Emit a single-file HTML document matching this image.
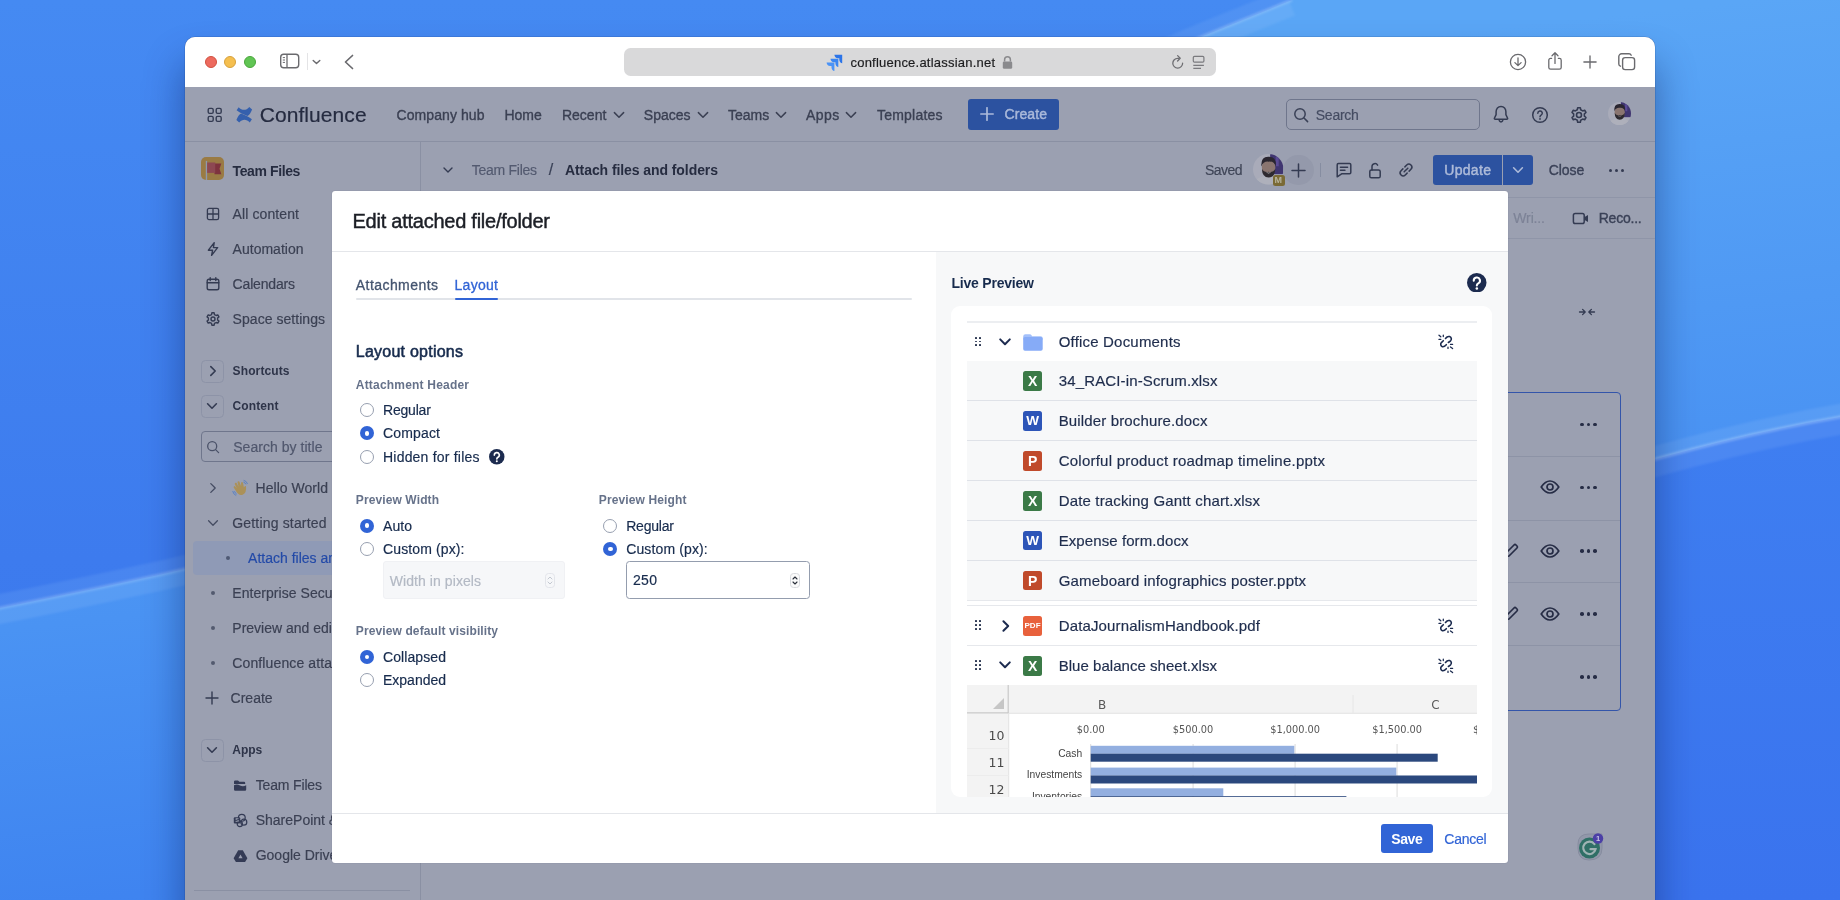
<!DOCTYPE html>
<html lang="en"><head><meta charset="utf-8"><title>Edit attached file/folder</title>
<style>
html,body{margin:0;padding:0;}
body{width:1840px;height:900px;overflow:hidden;position:relative;background:#4285f0;
 font-family:"Liberation Sans",sans-serif;}
#stage{position:absolute;left:0;top:0;width:1840px;height:900px;overflow:hidden;will-change:transform;}
.b{position:absolute;box-sizing:border-box;display:block;}
.t{position:absolute;white-space:nowrap;display:block;}
</style></head>
<body>
<div id="stage">
<svg class="b" style="left:0;top:0" width="1840" height="900" viewBox="0 0 1840 900">
<defs>
<linearGradient id="g0" x1="0" y1="0" x2="0" y2="1"><stop offset="0" stop-color="#458af2"/><stop offset="0.62" stop-color="#3d7bee"/><stop offset="1" stop-color="#3a76ea"/></linearGradient>
<linearGradient id="g1" gradientUnits="userSpaceOnUse" x1="1750" y1="0" x2="1846.1" y2="889.6"><stop offset="0" stop-color="#5aa6f6"/><stop offset="0.49" stop-color="#4a93f3"/><stop offset="0.8" stop-color="#3f84f0"/><stop offset="1" stop-color="#3b7fef"/></linearGradient>
<linearGradient id="g2" x1="0" y1="0" x2="0" y2="1"><stop offset="0" stop-color="#3f7ff1"/><stop offset="1" stop-color="#3a73ee"/></linearGradient>
<filter id="bl" x="-5%" y="-5%" width="110%" height="110%"><feGaussianBlur stdDeviation="0.9"/></filter>
</defs>
<rect width="1840" height="900" fill="url(#g0)"/>
<path d="M-60 619 L 0 608 C 60 596 125 583 185 569 C 485 506 901 160 1201 37 L 1292 0" fill="none" stroke="#7fb0f7" stroke-opacity="0.20" stroke-width="14" transform="translate(0,-7)" filter="url(#bl)"/>
<path d="M-60 619 L 0 608 C 60 596 125 583 185 569 C 485 506 901 160 1201 37 L 1292 0 L1900 0 L1900 900 L-60 900 Z" fill="url(#g1)"/>
<path d="M-60 619 L 0 608 C 60 596 125 583 185 569 C 485 506 901 160 1201 37 L 1292 0" fill="none" stroke="#9cc6fb" stroke-opacity="0.16" stroke-width="16" transform="translate(0,8)" filter="url(#bl)"/>
<path d="M-60 619 L 0 608 C 60 596 125 583 185 569 C 485 506 901 160 1201 37 L 1292 0" fill="none" stroke="#b4d4fc" stroke-opacity="0.33" stroke-width="3" filter="url(#bl)"/>
<path d="M1400 542 C 1550 487 1700 441 1840 417 L 1900 407" fill="none" stroke="#9cc6fb" stroke-opacity="0.16" stroke-width="13" transform="translate(0,-6.5)" filter="url(#bl)"/>
<path d="M1400 542 C 1550 487 1700 441 1840 417 L 1900 407 L1900 900 L1400 900 Z" fill="url(#g2)"/>
<path d="M1400 542 C 1550 487 1700 441 1840 417 L 1900 407" fill="none" stroke="#8fbdf8" stroke-opacity="0.16" stroke-width="18" transform="translate(0,9)" filter="url(#bl)"/>
<path d="M1400 542 C 1550 487 1700 441 1840 417 L 1900 407" fill="none" stroke="#b4d4fc" stroke-opacity="0.42" stroke-width="3" filter="url(#bl)"/>
</svg>
<div class="b" style="left:185px;top:37px;width:1470px;height:900px;border-radius:10px 10px 0 0;box-shadow:0 28px 38px 2px rgba(8,24,80,0.42),0 0 0 0.5px rgba(20,40,90,0.25);background:#9ba0b1;"></div>
<div class="b" style="left:185px;top:37px;width:1470px;height:50px;border-radius:10px 10px 0 0;background:#fff;"></div>
<div class="b" style="left:204.5px;top:56px;width:12px;height:12px;border-radius:50%;background:#ed6a5e;border:0.5px solid #d1503f;"></div>
<div class="b" style="left:224px;top:56px;width:12px;height:12px;border-radius:50%;background:#f5bf4f;border:0.5px solid #d7a13c;"></div>
<div class="b" style="left:243.5px;top:56px;width:12px;height:12px;border-radius:50%;background:#61c554;border:0.5px solid #4aa73c;"></div>
<svg class="b" style="left:279px;top:52px;" width="22" height="18" viewBox="0 0 22 18"><rect x="1.7" y="2.2" width="18" height="13.6" rx="3" fill="none" stroke="#6a6a6e" stroke-width="1.4"/><line x1="8" y1="2.2" x2="8" y2="15.8" stroke="#6a6a6e" stroke-width="1.3"/><path d="M3.8 5.6h2.2M3.8 8h2.2M3.8 10.4h2.2" stroke="#6a6a6e" stroke-width="1" fill="none"/></svg>
<div class="b" style="left:306.5px;top:53px;width:1px;height:17px;background:#e4e4e6;"></div>
<svg class="b" style="left:311px;top:57px;" width="11" height="10" viewBox="0 0 11 10"><path d="M2.2 3.4 L5.5 6.6 L8.8 3.4" fill="none" stroke="#6a6a6e" stroke-width="1.4" stroke-linecap="round" stroke-linejoin="round"/></svg>
<svg class="b" style="left:341px;top:53px;" width="16" height="18" viewBox="0 0 16 18"><path d="M11.5 2.5 L4.5 9 L11.5 15.5" fill="none" stroke="#6a6a6e" stroke-width="1.7" stroke-linecap="round" stroke-linejoin="round"/></svg>
<div class="b" style="left:624px;top:48.4px;width:592px;height:27.2px;border-radius:6.5px;background:#d9d9da;"></div>
<svg class="b" style="left:826px;top:53.5px;" width="17" height="17" viewBox="0 0 17 17"><defs><linearGradient id="jg" x1="1" y1="0" x2="0" y2="1"><stop offset="0" stop-color="#2a7bf0"/><stop offset="1" stop-color="#5a9bf5"/></linearGradient></defs><path d="M16.2 0.8H8.4c0 1.95 1.55 3.5 3.5 3.5h1.4v1.4c0 1.95 1.55 3.5 2.9 3.5z" fill="#2b74e8"/><path d="M12.3 4.7H4.5c0 1.95 1.55 3.5 3.5 3.5h1.4v1.4c0 1.95 1.55 3.5 2.9 3.5z" fill="#3a86f2"/><path d="M8.4 8.6H0.6c0 1.95 1.55 3.5 3.5 3.5h1.4v1.4c0 1.95 1.55 3.5 2.9 3.5z" fill="#4b93f6"/></svg>
<span class="t" style="left:850.50px;top:54.00px;font-size:13px;line-height:17px;color:#1d1d1f;letter-spacing:0.218px;-webkit-text-stroke:0.18px #1d1d1f;">confluence.atlassian.net</span>
<svg class="b" style="left:1001px;top:55px;" width="13" height="15" viewBox="0 0 13 15"><path d="M3.6 6.6V4.7a2.9 2.9 0 0 1 5.8 0v1.9" fill="none" stroke="#8a8a8d" stroke-width="1.5"/><rect x="1.8" y="6.4" width="9.4" height="7.4" rx="1.4" fill="#8a8a8d"/></svg>
<svg class="b" style="left:1169.5px;top:54.4px;" width="16" height="17" viewBox="0 0 16 17"><path d="M12.6 9.2a4.9 4.9 0 1 1-4.9-4.9h1.6" fill="none" stroke="#6e6e72" stroke-width="1.3" stroke-linecap="round"/><path d="M7.6 1.6 L10.2 4.3 L7.6 7" fill="none" stroke="#6e6e72" stroke-width="1.3" stroke-linecap="round" stroke-linejoin="round"/></svg>
<svg class="b" style="left:1190px;top:54px;" width="16" height="17" viewBox="0 0 16 17"><rect x="3.300" y="2.300" width="10.600" height="5.800" rx="1.200" fill="none" stroke="#7a7a7e" stroke-width="1.200"/><path d="M3.300 11.300h10.600M3.300 14.400h7.700" stroke="#7a7a7e" stroke-width="1.200" fill="none"/></svg>
<svg class="b" style="left:1508px;top:51.5px;" width="20" height="20" viewBox="0 0 20 20"><circle cx="10" cy="10" r="7.6" fill="none" stroke="#6a6a6e" stroke-width="1.3"/><path d="M10 5.8v7.6M6.9 10.6 L10 13.6 L13.1 10.6" fill="none" stroke="#6a6a6e" stroke-width="1.3" stroke-linecap="round" stroke-linejoin="round"/></svg>
<svg class="b" style="left:1546px;top:51px;" width="18" height="20" viewBox="0 0 18 20"><path d="M5.6 7.4H4.6a1.8 1.8 0 0 0-1.8 1.8v7.2a1.8 1.8 0 0 0 1.8 1.8h8.8a1.8 1.8 0 0 0 1.8-1.8V9.2a1.8 1.8 0 0 0-1.8-1.8h-1" fill="none" stroke="#6a6a6e" stroke-width="1.3" stroke-linecap="round"/><path d="M9 12.4V2M6 4.8 L9 1.8 L12 4.8" fill="none" stroke="#6a6a6e" stroke-width="1.3" stroke-linecap="round" stroke-linejoin="round"/></svg>
<svg class="b" style="left:1582px;top:53.5px;" width="16" height="16" viewBox="0 0 16 16"><path d="M8 1.9v12.2M1.9 8h12.2" stroke="#6a6a6e" stroke-width="1.35" stroke-linecap="round"/></svg>
<svg class="b" style="left:1617px;top:51.5px;" width="20" height="20" viewBox="0 0 20 20"><rect x="5.6" y="5.6" width="12" height="12" rx="2.6" fill="#fff" stroke="#6a6a6e" stroke-width="1.4"/><path d="M14.2 3.2 a2.4 2.4 0 0 0-2.2-1.4H4.6a2.8 2.8 0 0 0-2.8 2.8V12a2.4 2.4 0 0 0 1.6 2.2" fill="none" stroke="#6a6a6e" stroke-width="1.4" stroke-linecap="round"/></svg>
<div class="b" style="left:185px;top:140.5px;width:1470px;height:1px;background:#8a90a3;"></div>
<svg class="b" style="left:206px;top:105.6px;" width="18" height="18" viewBox="0 0 18 18"><rect x="2.2" y="2.4" width="5" height="5" rx="1.4" fill="none" stroke="#343b52" stroke-width="1.4"/><rect x="2.2" y="10.4" width="5" height="5" rx="1.4" fill="none" stroke="#343b52" stroke-width="1.4"/><rect x="10.2" y="2.4" width="5" height="5" rx="1.4" fill="none" stroke="#343b52" stroke-width="1.4"/><rect x="10.2" y="10.4" width="5" height="5" rx="1.4" fill="none" stroke="#343b52" stroke-width="1.4"/></svg>
<svg class="b" style="left:230px;top:100px;" width="30" height="30" viewBox="230 100 30 30"><path d="M236.6 110.3 L238.7 107.2 C 242 110.6, 246 110.9, 249.3 107 L252.1 109.5 C 251 112.5, 249.5 114.8, 247.5 116 C 243.5 114.6, 239.8 112.8, 236.6 110.3 Z" fill="#3560ad"/><path d="M236.6 110.3 L238.7 107.2 C 242 110.6, 246 110.9, 249.3 107 L252.1 109.5 C 251 112.5, 249.5 114.8, 247.5 116 C 243.5 114.6, 239.8 112.8, 236.6 110.3 Z" fill="#3560ad" transform="rotate(180 244.25 114.8)"/></svg>
<span class="t" style="left:259.70px;top:100.60px;font-size:21px;line-height:27px;color:#252b40;letter-spacing:0.073px;-webkit-text-stroke:0.18px #252b40;">Confluence</span>
<span class="t" style="left:396.50px;top:105.50px;font-size:14px;line-height:18px;color:#3b4053;letter-spacing:0.083px;-webkit-text-stroke:0.35px #3b4053;">Company hub</span>
<span class="t" style="left:504.50px;top:105.50px;font-size:14px;line-height:18px;color:#3b4053;letter-spacing:-0.015px;-webkit-text-stroke:0.35px #3b4053;">Home</span>
<span class="t" style="left:562.00px;top:105.50px;font-size:14px;line-height:18px;color:#3b4053;letter-spacing:-0.012px;-webkit-text-stroke:0.35px #3b4053;">Recent</span>
<svg class="b" style="left:612.7px;top:111px;" width="12" height="8" viewBox="0 0 12 8"><path d="M1.4 1.6 L6 6.2 L10.6 1.6" fill="none" stroke="#3b4053" stroke-width="1.5" stroke-linecap="round" stroke-linejoin="round"/></svg>
<span class="t" style="left:643.80px;top:105.50px;font-size:14px;line-height:18px;color:#3b4053;letter-spacing:0.000px;-webkit-text-stroke:0.35px #3b4053;">Spaces</span>
<svg class="b" style="left:696.5px;top:111px;" width="12" height="8" viewBox="0 0 12 8"><path d="M1.4 1.6 L6 6.2 L10.6 1.6" fill="none" stroke="#3b4053" stroke-width="1.5" stroke-linecap="round" stroke-linejoin="round"/></svg>
<span class="t" style="left:728.00px;top:105.50px;font-size:14px;line-height:18px;color:#3b4053;letter-spacing:-0.009px;-webkit-text-stroke:0.35px #3b4053;">Teams</span>
<svg class="b" style="left:775px;top:111px;" width="12" height="8" viewBox="0 0 12 8"><path d="M1.4 1.6 L6 6.2 L10.6 1.6" fill="none" stroke="#3b4053" stroke-width="1.5" stroke-linecap="round" stroke-linejoin="round"/></svg>
<span class="t" style="left:806.00px;top:105.50px;font-size:14px;line-height:18px;color:#3b4053;letter-spacing:0.430px;-webkit-text-stroke:0.35px #3b4053;">Apps</span>
<svg class="b" style="left:845px;top:111px;" width="12" height="8" viewBox="0 0 12 8"><path d="M1.4 1.6 L6 6.2 L10.6 1.6" fill="none" stroke="#3b4053" stroke-width="1.5" stroke-linecap="round" stroke-linejoin="round"/></svg>
<span class="t" style="left:877.00px;top:105.50px;font-size:14px;line-height:18px;color:#3b4053;letter-spacing:0.211px;-webkit-text-stroke:0.35px #3b4053;">Templates</span>
<div class="b" style="left:967.5px;top:98.8px;width:91.5px;height:30.8px;background:#2c52a0;border-radius:3px;"></div>
<svg class="b" style="left:980px;top:107px;" width="14" height="14" viewBox="0 0 14 14"><path d="M7 0.8v12.400M0.800 7h12.400" stroke="#aab9da" stroke-width="1.7" stroke-linecap="round"/></svg>
<span class="t" style="left:1004.50px;top:105.30px;font-size:14px;line-height:18px;color:#aab9da;letter-spacing:0.096px;-webkit-text-stroke:0.45px #aab9da;">Create</span>
<div class="b" style="left:1285.5px;top:98.8px;width:194px;height:30.8px;border:1.2px solid #6f768c;border-radius:5px;"></div>
<svg class="b" style="left:1293px;top:106.5px;" width="16" height="16" viewBox="0 0 16 16"><circle cx="7" cy="7" r="5.2" fill="none" stroke="#3a4157" stroke-width="1.5"/><path d="M11 11 L14.6 14.6" stroke="#3a4157" stroke-width="1.500" stroke-linecap="round"/></svg>
<span class="t" style="left:1315.80px;top:105.70px;font-size:14px;line-height:18px;color:#454c62;letter-spacing:-0.272px;-webkit-text-stroke:0.18px #454c62;">Search</span>
<svg class="b" style="left:1491px;top:104px;" width="20" height="21" viewBox="0 0 20 21"><path d="M10 2.6c-3 0-4.900 2.300-4.900 5.200v2.800L3.400 14.200c-.2.500.1 1 .7 1h11.800c.6 0 .9-.5.700-1l-1.700-3.600V7.800c0-2.900-1.900-5.200-4.900-5.200z" fill="none" stroke="#343b52" stroke-width="1.500" stroke-linejoin="round"/><path d="M8.200 16.600a1.900 1.900 0 0 0 3.600 0" fill="none" stroke="#343b52" stroke-width="1.500" stroke-linecap="round"/></svg>
<svg class="b" style="left:1530px;top:104.5px;" width="20" height="20" viewBox="0 0 20 20"><circle cx="10" cy="10" r="7.300" fill="none" stroke="#343b52" stroke-width="1.500"/><path d="M7.800 8.200a2.250 2.250 0 1 1 3.300 2c-.7.400-1.100.800-1.100 1.600" fill="none" stroke="#343b52" stroke-width="1.500" stroke-linecap="round"/><circle cx="10" cy="13.900" r="0.950" fill="#343b52"/></svg>
<svg class="b" style="left:1568.5px;top:104.5px;" width="20" height="20" viewBox="0 0 20 20"><path d="M8.69 2.72 L11.31 2.72 L11.70 4.77 L13.68 5.91 L15.65 5.22 L16.96 7.49 L15.38 8.86 L15.38 11.14 L16.96 12.51 L15.65 14.78 L13.68 14.09 L11.70 15.23 L11.31 17.28 L8.69 17.28 L8.30 15.23 L6.32 14.09 L4.35 14.78 L3.04 12.51 L4.62 11.14 L4.62 8.86 L3.04 7.49 L4.35 5.22 L6.32 5.91 L8.30 4.77Z" fill="none" stroke="#343b52" stroke-width="1.6" stroke-linejoin="round"/><circle cx="10" cy="10" r="2.5" fill="none" stroke="#343b52" stroke-width="1.6"/></svg>
<svg class="b" style="left:1608.0px;top:102.3px;" width="23.0" height="23.0" viewBox="0 0 23.0 23.0"><defs><clipPath id="av1"><circle cx="11.5" cy="11.5" r="11.5"/></clipPath></defs><g clip-path="url(#av1)"><rect width="23.0" height="23.0" fill="#a9abb9"/><rect x="12.88" y="0" width="10.12" height="15.180000000000001" fill="#3f3570"/><rect x="17.02" y="2.3000000000000003" width="2.3000000000000003" height="6.8999999999999995" fill="#5a4a95"/><ellipse cx="11.5" cy="23.92" rx="11.5" ry="7.590000000000001" fill="#aeb0bb"/><ellipse cx="11.73" cy="10.35" rx="5.06" ry="6.44" fill="#8a7570"/><path d="M6.210000000000001 9.43 Q5.75 1.84 11.73 2.07 Q17.71 1.84 17.25 9.43 Q15.87 5.29 11.73 5.75 Q7.82 5.29 6.210000000000001 9.43Z" fill="#2a2630"/><path d="M6.67 11.04 Q6.8999999999999995 17.48 11.73 17.71 Q16.56 17.48 16.79 11.04 Q15.180000000000001 14.03 11.73 13.34 Q8.28 14.03 6.67 11.04Z" fill="#2e2a30"/><path d="M9.66 13.799999999999999 Q11.73 15.41 13.799999999999999 13.799999999999999 Q11.73 14.49 9.66 13.799999999999999Z" fill="#c9c6c6"/></g></svg>
<div class="b" style="left:419.5px;top:141px;width:1px;height:760px;background:#8a90a3;"></div>
<div class="b" style="left:201px;top:156.9px;width:23.2px;height:23.1px;background:#9a7b44;border-radius:5px;overflow:hidden;"></div>
<svg class="b" style="left:201px;top:156.9px;" width="23.2" height="23.1" viewBox="0 0 23.2 23.1"><rect x="4.800" y="3.900" width="1.350" height="19.300" fill="#8f98ad"/><path d="M13.500 6.500h6.900l-1.900 5.300 1.900 5.400h-6.900z" fill="#7e333e"/><path d="M6.150 5.500h8.100v10.400h-8.100z" fill="#8d4852"/></svg>
<span class="t" style="left:232.60px;top:162.00px;font-size:14px;line-height:18px;color:#262c40;letter-spacing:-0.392px;font-weight:700;">Team Files</span>
<svg class="b" style="left:204.6px;top:206px;" width="16" height="16" viewBox="0 0 16 16"><rect x="2.400" y="2.400" width="11.200" height="11.200" rx="1.600" fill="none" stroke="#343b52" stroke-width="1.300"/><path d="M8 2.400v11.200M2.400 8h11.200" stroke="#343b52" stroke-width="1.300"/></svg>
<span class="t" style="left:232.60px;top:205.00px;font-size:14px;line-height:18px;color:#3b4053;letter-spacing:0.103px;-webkit-text-stroke:0.18px #3b4053;">All content</span>
<svg class="b" style="left:204.6px;top:241px;" width="16" height="16" viewBox="0 0 16 16"><path d="M9.200 1.600 L3.400 9.200 H7.600 L6.600 14.400 L12.600 6.600 H8.400 Z" fill="none" stroke="#343b52" stroke-width="1.400" stroke-linejoin="round"/></svg>
<span class="t" style="left:232.60px;top:240.00px;font-size:14px;line-height:18px;color:#3b4053;letter-spacing:0.009px;-webkit-text-stroke:0.18px #3b4053;">Automation</span>
<svg class="b" style="left:204.6px;top:275.7px;" width="16" height="16" viewBox="0 0 16 16"><rect x="2.200" y="3.200" width="11.600" height="10.600" rx="1.800" fill="none" stroke="#343b52" stroke-width="1.400"/><path d="M2.200 6.800h11.600M5.200 1.600v3M10.800 1.600v3" stroke="#343b52" stroke-width="1.400" stroke-linecap="round"/></svg>
<span class="t" style="left:232.60px;top:274.70px;font-size:14px;line-height:18px;color:#3b4053;letter-spacing:-0.177px;-webkit-text-stroke:0.18px #3b4053;">Calendars</span>
<svg class="b" style="left:204.6px;top:310.9px;" width="16" height="16" viewBox="0 0 16 16"><path d="M6.88 1.80 L9.12 1.80 L9.45 3.53 L11.14 4.51 L12.81 3.93 L13.93 5.87 L12.60 7.02 L12.60 8.98 L13.93 10.13 L12.81 12.07 L11.14 11.49 L9.45 12.47 L9.12 14.20 L6.88 14.20 L6.55 12.47 L4.86 11.49 L3.19 12.07 L2.07 10.13 L3.40 8.98 L3.40 7.02 L2.07 5.87 L3.19 3.93 L4.86 4.51 L6.55 3.53Z" fill="none" stroke="#343b52" stroke-width="1.4" stroke-linejoin="round"/><circle cx="8" cy="8" r="2.0" fill="none" stroke="#343b52" stroke-width="1.4"/></svg>
<span class="t" style="left:232.60px;top:309.90px;font-size:14px;line-height:18px;color:#3b4053;letter-spacing:0.043px;-webkit-text-stroke:0.18px #3b4053;">Space settings</span>
<div class="b" style="left:201.0px;top:359.7px;width:23px;height:23px;border:1px solid #8d93a7;border-radius:4.500px;"></div>
<svg class="b" style="left:208.79999999999998px;top:365.2px;" width="8" height="12" viewBox="0 0 8 12"><path d="M1.800 1.600 L6.200 6 L1.800 10.400" fill="none" stroke="#343b52" stroke-width="1.600" stroke-linecap="round" stroke-linejoin="round"/></svg>
<span class="t" style="left:232.60px;top:362.80px;font-size:12px;line-height:16px;color:#2e3449;letter-spacing:0.112px;font-weight:700;">Shortcuts</span>
<div class="b" style="left:201.0px;top:394.7px;width:23px;height:23px;border:1px solid #8d93a7;border-radius:4.500px;"></div>
<svg class="b" style="left:206.39999999999998px;top:402.2px;" width="12" height="8" viewBox="0 0 12 8"><path d="M1.600 1.800 L6 6.200 L10.400 1.800" fill="none" stroke="#343b52" stroke-width="1.600" stroke-linecap="round" stroke-linejoin="round"/></svg>
<span class="t" style="left:232.60px;top:398.00px;font-size:12px;line-height:16px;color:#2e3449;letter-spacing:0.096px;font-weight:700;">Content</span>
<div class="b" style="left:201.2px;top:431.2px;width:240px;height:31px;border:1.200px solid #6f768c;border-radius:4px;"></div>
<svg class="b" style="left:206.3px;top:440.3px;" width="14" height="14" viewBox="0 0 14 14"><circle cx="6.200" cy="6.200" r="4.500" fill="none" stroke="#4a5168" stroke-width="1.300"/><path d="M9.600 9.600 L12.600 12.600" stroke="#4a5168" stroke-width="1.300" stroke-linecap="round"/></svg>
<span class="t" style="left:233.20px;top:438.30px;font-size:14px;line-height:18px;color:#50576d;letter-spacing:0.042px;-webkit-text-stroke:0.18px #50576d;">Search by title</span>
<svg class="b" style="left:208.7px;top:482px;" width="8" height="12" viewBox="0 0 8 12"><path d="M1.800 1.600 L6.200 6 L1.800 10.400" fill="none" stroke="#454c62" stroke-width="1.300" stroke-linecap="round" stroke-linejoin="round"/></svg>
<svg class="b" style="left:231px;top:479px;" width="18" height="18" viewBox="0 0 18 18"><g transform="rotate(-20 9 9.5)"><path d="M4.200 10 L3.400 6.400 Q3.600 4.900 5 5.400 L6 8.200 L5.600 3.400 Q6.200 2 7.600 3 L8.200 7.400 L8.800 2.600 Q9.600 1.400 10.800 2.600 L10.800 7.800 L12 4.400 Q13.200 3.600 13.800 5 L13 10 Q14.200 8.400 15.400 9.400 Q14 15.800 9.400 16.200 Q5.200 16.400 4.200 10Z" fill="#ab9159"/></g><path d="M1.800 12.400 Q2.200 15.200 4.800 16.400M3.600 12.600 Q3.900 14.200 5.400 15" fill="none" stroke="#5a82c4" stroke-width="1" stroke-linecap="round"/><path d="M13 1.400 Q15.600 2 16.400 4.600M12.800 3.200 Q14.200 3.600 14.800 5" fill="none" stroke="#5a82c4" stroke-width="1" stroke-linecap="round"/></svg>
<span class="t" style="left:255.60px;top:479.00px;font-size:14px;line-height:18px;color:#3b4053;letter-spacing:0.030px;-webkit-text-stroke:0.18px #3b4053;">Hello World</span>
<svg class="b" style="left:206.7px;top:519px;" width="12" height="8" viewBox="0 0 12 8"><path d="M1.600 1.800 L6 6.200 L10.400 1.800" fill="none" stroke="#454c62" stroke-width="1.300" stroke-linecap="round" stroke-linejoin="round"/></svg>
<span class="t" style="left:232.30px;top:513.90px;font-size:14px;line-height:18px;color:#3b4053;letter-spacing:0.169px;-webkit-text-stroke:0.18px #3b4053;">Getting started</span>
<div class="b" style="left:193px;top:540.6px;width:226.5px;height:34.2px;background:#8f9ab6;border-radius:4px 0 0 4px;"></div>
<div class="b" style="left:226.1px;top:555.6px;width:4.2px;height:4.2px;border-radius:50%;background:#4f5974;"></div>
<span class="t" style="left:248.10px;top:548.70px;font-size:14px;line-height:18px;color:#234aa8;letter-spacing:0.000px;-webkit-text-stroke:0.18px #234aa8;">Attach files and folders</span>
<div class="b" style="left:210.6px;top:590.6999999999999px;width:4.2px;height:4.2px;border-radius:50%;background:#535a6f;"></div>
<span class="t" style="left:232.30px;top:583.80px;font-size:14px;line-height:18px;color:#3b4053;letter-spacing:0.052px;-webkit-text-stroke:0.18px #3b4053;">Enterprise Security</span>
<div class="b" style="left:210.6px;top:625.6px;width:4.2px;height:4.2px;border-radius:50%;background:#535a6f;"></div>
<span class="t" style="left:232.30px;top:618.70px;font-size:14px;line-height:18px;color:#3b4053;letter-spacing:0.000px;-webkit-text-stroke:0.18px #3b4053;">Preview and edit</span>
<div class="b" style="left:210.6px;top:660.6999999999999px;width:4.2px;height:4.2px;border-radius:50%;background:#535a6f;"></div>
<span class="t" style="left:232.30px;top:653.80px;font-size:14px;line-height:18px;color:#3b4053;letter-spacing:0.120px;-webkit-text-stroke:0.18px #3b4053;">Confluence attachments</span>
<svg class="b" style="left:205.4px;top:690.8px;" width="14" height="14" viewBox="0 0 14 14"><path d="M7 1v12M1 7h12" stroke="#343b52" stroke-width="1.400" stroke-linecap="round"/></svg>
<span class="t" style="left:230.60px;top:688.80px;font-size:14px;line-height:18px;color:#3b4053;letter-spacing:0.000px;-webkit-text-stroke:0.18px #3b4053;">Create</span>
<div class="b" style="left:201.0px;top:738.5px;width:23px;height:23px;border:1px solid #8d93a7;border-radius:4.500px;"></div>
<svg class="b" style="left:206.39999999999998px;top:746.0px;" width="12" height="8" viewBox="0 0 12 8"><path d="M1.600 1.800 L6 6.200 L10.400 1.800" fill="none" stroke="#343b52" stroke-width="1.600" stroke-linecap="round" stroke-linejoin="round"/></svg>
<span class="t" style="left:232.30px;top:742.00px;font-size:12px;line-height:16px;color:#2e3449;letter-spacing:0.000px;font-weight:700;">Apps</span>
<svg class="b" style="left:233px;top:778.5px;" width="14" height="13" viewBox="0 0 14 13"><path d="M1 2.600 Q1 1.400 2.200 1.400 H5 L6.400 2.800 H11 Q12.200 2.800 12.200 4 V5 H1 Z" fill="#343b55"/><path d="M1 6.200 Q4 4.600 7 6.400 Q10 8 13.200 6.200 V10.600 Q13.200 11.800 12 11.800 H2.200 Q1 11.800 1 10.600 Z" fill="#343b55"/></svg>
<span class="t" style="left:255.70px;top:776.00px;font-size:14px;line-height:18px;color:#3b4053;letter-spacing:-0.154px;-webkit-text-stroke:0.18px #3b4053;">Team Files</span>
<svg class="b" style="left:232.5px;top:813px;" width="15" height="15" viewBox="0 0 15 15"><circle cx="8.800" cy="4.800" r="3.400" fill="none" stroke="#343b55" stroke-width="1.200"/><circle cx="10.800" cy="9.200" r="3" fill="none" stroke="#343b55" stroke-width="1.200"/><circle cx="6.800" cy="11" r="2.600" fill="none" stroke="#343b55" stroke-width="1.200"/><rect x="0.800" y="4.200" width="6.400" height="6.400" rx="1" fill="#343b55"/><text x="4" y="9.400" font-size="5.500" font-weight="700" text-anchor="middle" fill="#9ba0b1" font-family="Liberation Sans, sans-serif">S</text></svg>
<span class="t" style="left:255.70px;top:811.00px;font-size:14px;line-height:18px;color:#3b4053;letter-spacing:0.000px;-webkit-text-stroke:0.18px #3b4053;">SharePoint &amp; OneDrive</span>
<svg class="b" style="left:232.5px;top:848.5px;" width="15" height="14" viewBox="0 0 15 14"><path d="M5.200 1.200 H9.800 L14.400 9.200 L12.100 13 H2.900 L0.600 9.200 Z" fill="#343b55"/><path d="M7.500 5.600 L9.600 9.200 H5.400 Z" fill="#9ba0b1"/></svg>
<span class="t" style="left:255.70px;top:846.30px;font-size:14px;line-height:18px;color:#3b4053;letter-spacing:0.000px;-webkit-text-stroke:0.18px #3b4053;">Google Drive</span>
<div class="b" style="left:193.6px;top:890.3px;width:216.7px;height:1px;background:#8a90a3;"></div>
<svg class="b" style="left:441.5px;top:165.8px;" width="12" height="8" viewBox="0 0 12 8"><path d="M2 2 L6 6 L10 2" fill="none" stroke="#343b52" stroke-width="1.400" stroke-linecap="round" stroke-linejoin="round"/></svg>
<span class="t" style="left:471.80px;top:160.50px;font-size:14px;line-height:18px;color:#535a70;letter-spacing:-0.276px;-webkit-text-stroke:0.18px #535a70;">Team Files</span>
<span class="t" style="left:548.70px;top:158.80px;font-size:16px;line-height:21px;color:#3a4157;letter-spacing:0.000px;-webkit-text-stroke:0.18px #3a4157;">/</span>
<span class="t" style="left:565.00px;top:160.50px;font-size:14px;line-height:18px;color:#262c40;letter-spacing:-0.079px;font-weight:700;">Attach files and folders</span>
<span class="t" style="left:1205.00px;top:161.00px;font-size:14px;line-height:18px;color:#3f4557;letter-spacing:-0.549px;-webkit-text-stroke:0.18px #3f4557;">Saved</span>
<svg class="b" style="left:1253.2px;top:154.2px;" width="30.6" height="30.6" viewBox="0 0 30.6 30.6"><defs><clipPath id="av2"><circle cx="15.3" cy="15.3" r="15.3"/></clipPath></defs><g clip-path="url(#av2)"><rect width="30.6" height="30.6" fill="#a9abb9"/><rect x="17.136000000000003" y="0" width="13.464" height="20.196" fill="#3f3570"/><rect x="22.644000000000002" y="3.0600000000000005" width="3.0600000000000005" height="9.18" fill="#5a4a95"/><ellipse cx="15.3" cy="31.824" rx="15.3" ry="10.098" fill="#aeb0bb"/><ellipse cx="15.606000000000002" cy="13.770000000000001" rx="6.732" ry="8.568000000000001" fill="#8a7570"/><path d="M8.262 12.546 Q7.65 2.448 15.606000000000002 2.754 Q23.562 2.448 22.950000000000003 12.546 Q21.114 7.038 15.606000000000002 7.65 Q10.404000000000002 7.038 8.262 12.546Z" fill="#2a2630"/><path d="M8.874 14.688 Q9.18 23.256 15.606000000000002 23.562 Q22.032 23.256 22.338 14.688 Q20.196 18.666 15.606000000000002 17.748 Q11.016 18.666 8.874 14.688Z" fill="#2e2a30"/><path d="M12.852 18.36 Q15.606000000000002 20.502000000000002 18.36 18.36 Q15.606000000000002 19.278000000000002 12.852 18.36Z" fill="#c9c6c6"/></g></svg>
<div class="b" style="left:1283px;top:154.5px;width:30.5px;height:30.5px;border-radius:50%;background:#9499ab;"></div>
<svg class="b" style="left:1291px;top:162.5px;" width="15" height="15" viewBox="0 0 15 15"><path d="M7.500 1v13M1 7.500h13" stroke="#343b52" stroke-width="1.500" stroke-linecap="round"/></svg>
<div class="b" style="left:1272.5px;top:174.5px;width:12.4px;height:11.5px;background:#7a6a35;border-radius:2.500px;"></div>
<span class="t" style="left:1274.60px;top:174.40px;font-size:9px;line-height:12px;color:#b7b39c;letter-spacing:0.000px;font-weight:700;">M</span>
<div class="b" style="left:1319.5px;top:163px;width:1.2px;height:14px;background:#868da1;"></div>
<svg class="b" style="left:1334.5px;top:161px;" width="18" height="18" viewBox="0 0 18 18"><path d="M2.200 3.800 Q2.200 2.600 3.400 2.600 H14.600 Q15.800 2.600 15.800 3.800 V11.600 Q15.800 12.800 14.600 12.800 H6.600 L2.200 15.800 Z" fill="none" stroke="#343b52" stroke-width="1.500" stroke-linejoin="round"/><path d="M5.400 6.200h7.200M5.400 9.200h4.600" stroke="#343b52" stroke-width="1.400" stroke-linecap="round"/></svg>
<svg class="b" style="left:1366.5px;top:160.5px;" width="16" height="19" viewBox="0 0 16 19"><rect x="2.800" y="9" width="10.400" height="7.800" rx="1.600" fill="none" stroke="#343b52" stroke-width="1.500"/><path d="M5 9 V5.600 a3 3 0 0 1 5.600 -1.500" fill="none" stroke="#343b52" stroke-width="1.500" stroke-linecap="round"/></svg>
<svg class="b" style="left:1397px;top:161px;" width="18" height="18" viewBox="0 0 18 18"><g transform="rotate(-45 9 9)" fill="none" stroke="#343b52" stroke-width="1.500" stroke-linecap="round"><path d="M7.600 6 H5 a3 3 0 0 0 0 6 H7.600"/><path d="M10.400 6 H13 a3 3 0 0 1 0 6 H10.400"/><path d="M6.400 9 H11.600"/></g></svg>
<div class="b" style="left:1432.5px;top:154.5px;width:69.3px;height:30.8px;background:#2c52a0;border-radius:3px 0 0 3px;"></div>
<div class="b" style="left:1503px;top:154.5px;width:30px;height:30.8px;background:#2c52a0;border-radius:0 3px 3px 0;"></div>
<span class="t" style="left:1444.20px;top:161.00px;font-size:14px;line-height:18px;color:#aebbd9;letter-spacing:0.331px;-webkit-text-stroke:0.45px #aebbd9;">Update</span>
<svg class="b" style="left:1512px;top:166px;" width="12" height="8" viewBox="0 0 12 8"><path d="M1.600 1.800 L6 6.200 L10.400 1.800" fill="none" stroke="#aebbd9" stroke-width="1.600" stroke-linecap="round" stroke-linejoin="round"/></svg>
<span class="t" style="left:1548.80px;top:161.00px;font-size:14px;line-height:18px;color:#3a4157;letter-spacing:-0.074px;-webkit-text-stroke:0.35px #3a4157;">Close</span>
<div class="b" style="left:1608.8px;top:168.7px;width:3px;height:3px;border-radius:50%;background:#343b52;"></div>
<div class="b" style="left:1615.0px;top:168.7px;width:3px;height:3px;border-radius:50%;background:#343b52;"></div>
<div class="b" style="left:1621.2px;top:168.7px;width:3px;height:3px;border-radius:50%;background:#343b52;"></div>
<div class="b" style="left:1508px;top:197px;width:146.5px;height:1px;background:#8f95a8;"></div>
<div class="b" style="left:1508px;top:238px;width:146.5px;height:1px;background:#8f95a8;"></div>
<span class="t" style="left:1513.30px;top:209.30px;font-size:14px;line-height:18px;color:#7d8397;letter-spacing:-0.140px;-webkit-text-stroke:0.18px #7d8397;">Wri...</span>
<svg class="b" style="left:1572px;top:211px;" width="18" height="15" viewBox="0 0 18 15"><rect x="1.400" y="2.400" width="10.800" height="10.200" rx="1.800" fill="none" stroke="#343b52" stroke-width="1.500"/><path d="M12.200 6.200 L16 4 V11 L12.200 8.800 Z" fill="#343b52"/></svg>
<span class="t" style="left:1598.70px;top:209.30px;font-size:14px;line-height:18px;color:#3a4157;letter-spacing:-0.225px;-webkit-text-stroke:0.35px #3a4157;">Reco...</span>
<svg class="b" style="left:1578px;top:306px;" width="18" height="12" viewBox="0 0 18 12"><path d="M1.500 6h5.500M4.600 3.400 L7.200 6 L4.600 8.600M16.500 6h-5.500M13.400 3.400 L10.800 6 L13.400 8.600" fill="none" stroke="#343b52" stroke-width="1.300" stroke-linecap="round" stroke-linejoin="round"/></svg>
<div class="b" style="left:1400px;top:392.3px;width:220.8px;height:318.5px;border:1.300px solid #3355aa;border-radius:4px;"></div>
<div class="b" style="left:1400px;top:456px;width:219.5px;height:1px;background:#8d93a6;"></div>
<div class="b" style="left:1400px;top:519.7px;width:219.5px;height:1px;background:#8d93a6;"></div>
<div class="b" style="left:1400px;top:582.3px;width:219.5px;height:1px;background:#8d93a6;"></div>
<div class="b" style="left:1400px;top:645.4px;width:219.5px;height:1px;background:#8d93a6;"></div>
<div class="b" style="left:1580.4px;top:422.5px;width:3.6px;height:3.6px;border-radius:50%;background:#262c45;"></div>
<div class="b" style="left:1586.7px;top:422.5px;width:3.6px;height:3.6px;border-radius:50%;background:#262c45;"></div>
<div class="b" style="left:1593.0px;top:422.5px;width:3.6px;height:3.6px;border-radius:50%;background:#262c45;"></div>
<svg class="b" style="left:1538.5px;top:479.4px;" width="22" height="16" viewBox="0 0 22 16"><path d="M2.200 8 Q6.300 2 11 2 Q15.700 2 19.800 8 Q15.700 14 11 14 Q6.300 14 2.200 8Z" fill="none" stroke="#262c45" stroke-width="1.700" stroke-linejoin="round"/><circle cx="11" cy="8" r="3" fill="none" stroke="#262c45" stroke-width="1.700"/></svg>
<div class="b" style="left:1580.4px;top:485.59999999999997px;width:3.6px;height:3.6px;border-radius:50%;background:#262c45;"></div>
<div class="b" style="left:1586.7px;top:485.59999999999997px;width:3.6px;height:3.6px;border-radius:50%;background:#262c45;"></div>
<div class="b" style="left:1593.0px;top:485.59999999999997px;width:3.6px;height:3.6px;border-radius:50%;background:#262c45;"></div>
<svg class="b" style="left:1538.5px;top:543px;" width="22" height="16" viewBox="0 0 22 16"><path d="M2.200 8 Q6.300 2 11 2 Q15.700 2 19.800 8 Q15.700 14 11 14 Q6.300 14 2.200 8Z" fill="none" stroke="#262c45" stroke-width="1.700" stroke-linejoin="round"/><circle cx="11" cy="8" r="3" fill="none" stroke="#262c45" stroke-width="1.700"/></svg>
<div class="b" style="left:1580.4px;top:549.2px;width:3.6px;height:3.6px;border-radius:50%;background:#262c45;"></div>
<div class="b" style="left:1586.7px;top:549.2px;width:3.6px;height:3.6px;border-radius:50%;background:#262c45;"></div>
<div class="b" style="left:1593.0px;top:549.2px;width:3.6px;height:3.6px;border-radius:50%;background:#262c45;"></div>
<svg class="b" style="left:1538.5px;top:606px;" width="22" height="16" viewBox="0 0 22 16"><path d="M2.200 8 Q6.300 2 11 2 Q15.700 2 19.800 8 Q15.700 14 11 14 Q6.300 14 2.200 8Z" fill="none" stroke="#262c45" stroke-width="1.700" stroke-linejoin="round"/><circle cx="11" cy="8" r="3" fill="none" stroke="#262c45" stroke-width="1.700"/></svg>
<div class="b" style="left:1580.4px;top:612.2px;width:3.6px;height:3.6px;border-radius:50%;background:#262c45;"></div>
<div class="b" style="left:1586.7px;top:612.2px;width:3.6px;height:3.6px;border-radius:50%;background:#262c45;"></div>
<div class="b" style="left:1593.0px;top:612.2px;width:3.6px;height:3.6px;border-radius:50%;background:#262c45;"></div>
<svg class="b" style="left:1502px;top:542px;" width="18" height="18" viewBox="0 0 18 18"><path d="M3 15 L4 11 L12 3 Q13 2 14 3 L15 4 Q16 5 15 6 L7 14 Z" fill="none" stroke="#262c45" stroke-width="1.700" stroke-linejoin="round"/></svg>
<svg class="b" style="left:1502px;top:605px;" width="18" height="18" viewBox="0 0 18 18"><path d="M3 15 L4 11 L12 3 Q13 2 14 3 L15 4 Q16 5 15 6 L7 14 Z" fill="none" stroke="#262c45" stroke-width="1.700" stroke-linejoin="round"/></svg>
<div class="b" style="left:1580.4px;top:675.2px;width:3.6px;height:3.6px;border-radius:50%;background:#262c45;"></div>
<div class="b" style="left:1586.7px;top:675.2px;width:3.6px;height:3.6px;border-radius:50%;background:#262c45;"></div>
<div class="b" style="left:1593.0px;top:675.2px;width:3.6px;height:3.6px;border-radius:50%;background:#262c45;"></div>
<svg class="b" style="left:1574px;top:830px;" width="32" height="34" viewBox="0 0 32 34"><path d="M4 14 Q4 4 15 4 H28 V18 Q28 30 15 30 Q4 30 4 18Z" fill="#9298aa" stroke="#868c9f" stroke-width="1"/><circle cx="15.500" cy="18" r="10.500" fill="#2f6f66"/><path d="M20.500 14.200 A6.200 6.200 0 1 0 21.500 19.200 H16.500" fill="none" stroke="#9fb3b4" stroke-width="2.200" stroke-linecap="round"/><circle cx="24" cy="8.500" r="5.200" fill="#4b3fa6"/><text x="24" y="11.300" font-size="7.500" font-weight="700" text-anchor="middle" fill="#c9c6e6" font-family="Liberation Sans, sans-serif">1</text></svg>
<div class="b" style="left:332px;top:191px;width:1176px;height:672.3px;background:#fff;border-radius:3px;box-shadow:0 0 1px rgba(9,30,66,0.310);"></div>
<span class="t" style="left:352.50px;top:208.00px;font-size:20px;line-height:26px;color:#1c1f26;letter-spacing:-0.248px;-webkit-text-stroke:0.45px #1c1f26;">Edit attached file/folder</span>
<div class="b" style="left:332px;top:250.5px;width:1176px;height:1.2px;background:#e4e6ea;"></div>
<div class="b" style="left:332px;top:812.8px;width:1176px;height:1.2px;background:#e4e6ea;"></div>
<span class="t" style="left:355.80px;top:275.50px;font-size:14px;line-height:18px;color:#44546F;letter-spacing:0.439px;-webkit-text-stroke:0.3px #44546F;">Attachments</span>
<span class="t" style="left:454.50px;top:275.50px;font-size:14px;line-height:18px;color:#3164d6;letter-spacing:0.293px;-webkit-text-stroke:0.3px #3164d6;">Layout</span>
<div class="b" style="left:355.8px;top:298px;width:556px;height:2px;background:#e1e4e9;border-radius:1px;"></div>
<div class="b" style="left:454.5px;top:298px;width:43.5px;height:2px;background:#3164d6;border-radius:1px;"></div>
<span class="t" style="left:355.80px;top:340.50px;font-size:16px;line-height:21px;color:#172B4D;letter-spacing:0.240px;-webkit-text-stroke:0.55px #172B4D;">Layout options</span>
<span class="t" style="left:355.80px;top:376.50px;font-size:12px;line-height:16px;color:#66728a;letter-spacing:0.198px;font-weight:700;">Attachment Header</span>
<div class="b" style="left:360px;top:403px;width:14px;height:14px;border-radius:50%;background:#fff;border:1px solid #979fb0;"></div>
<span class="t" style="left:383.00px;top:401.00px;font-size:14px;line-height:18px;color:#172B4D;letter-spacing:-0.205px;-webkit-text-stroke:0.18px #172B4D;">Regular</span>
<div class="b" style="left:360px;top:426.3px;width:14px;height:14px;border-radius:50%;background:#3164d6;"></div>
<div class="b" style="left:364.6px;top:430.90000000000003px;width:4.8px;height:4.8px;border-radius:50%;background:#fff;"></div>
<span class="t" style="left:383.00px;top:424.30px;font-size:14px;line-height:18px;color:#172B4D;letter-spacing:0.163px;-webkit-text-stroke:0.18px #172B4D;">Compact</span>
<div class="b" style="left:360px;top:449.8px;width:14px;height:14px;border-radius:50%;background:#fff;border:1px solid #979fb0;"></div>
<span class="t" style="left:383.00px;top:447.80px;font-size:14px;line-height:18px;color:#172B4D;letter-spacing:0.208px;-webkit-text-stroke:0.18px #172B4D;">Hidden for files</span>
<svg class="b" style="left:489.05px;top:449.25px;" width="15.5" height="15.5" viewBox="0 0 20 20"><circle cx="10" cy="10" r="10" fill="#1c2b4f"/><path d="M6.900 7.900a3.200 3.200 0 1 1 4.700 2.800c-1 .600-1.500 1.100-1.500 2.200" fill="none" stroke="#fff" stroke-width="2.100" stroke-linecap="round"/><circle cx="10.100" cy="15.800" r="1.300" fill="#fff"/></svg>
<span class="t" style="left:355.80px;top:492.00px;font-size:12px;line-height:16px;color:#66728a;letter-spacing:0.108px;font-weight:700;">Preview Width</span>
<div class="b" style="left:360px;top:518.7px;width:14px;height:14px;border-radius:50%;background:#3164d6;"></div>
<div class="b" style="left:364.6px;top:523.3000000000001px;width:4.8px;height:4.8px;border-radius:50%;background:#fff;"></div>
<span class="t" style="left:383.00px;top:516.70px;font-size:14px;line-height:18px;color:#172B4D;letter-spacing:0.066px;-webkit-text-stroke:0.18px #172B4D;">Auto</span>
<div class="b" style="left:360px;top:542px;width:14px;height:14px;border-radius:50%;background:#fff;border:1px solid #979fb0;"></div>
<span class="t" style="left:383.00px;top:540.00px;font-size:14px;line-height:18px;color:#172B4D;letter-spacing:0.125px;-webkit-text-stroke:0.18px #172B4D;">Custom (px):</span>
<div class="b" style="left:382.8px;top:560.8px;width:182px;height:38.3px;background:#f6f7f9;border:1px solid #f0f1f4;border-radius:3px;"></div>
<span class="t" style="left:389.80px;top:571.50px;font-size:14px;line-height:18px;color:#b3b9c4;letter-spacing:0.067px;-webkit-text-stroke:0.18px #b3b9c4;">Width in pixels</span>
<svg class="b" style="left:545px;top:573px;" width="10" height="15" viewBox="0 0 10 15"><rect x="0.500" y="0.500" width="9" height="14" rx="3" fill="none" stroke="#e3e5ea" stroke-width="1"/><path d="M3 6 L5 4 L7 6M3 9 L5 11 L7 9" fill="none" stroke="#c3c8d1" stroke-width="1" stroke-linecap="round" stroke-linejoin="round"/></svg>
<span class="t" style="left:598.80px;top:492.00px;font-size:12px;line-height:16px;color:#66728a;letter-spacing:0.121px;font-weight:700;">Preview Height</span>
<div class="b" style="left:603.3px;top:518.7px;width:14px;height:14px;border-radius:50%;background:#fff;border:1px solid #979fb0;"></div>
<span class="t" style="left:626.20px;top:516.70px;font-size:14px;line-height:18px;color:#172B4D;letter-spacing:-0.205px;-webkit-text-stroke:0.18px #172B4D;">Regular</span>
<div class="b" style="left:603.3px;top:542px;width:14px;height:14px;border-radius:50%;background:#3164d6;"></div>
<div class="b" style="left:607.9px;top:546.6px;width:4.8px;height:4.8px;border-radius:50%;background:#fff;"></div>
<span class="t" style="left:626.20px;top:540.00px;font-size:14px;line-height:18px;color:#172B4D;letter-spacing:0.125px;-webkit-text-stroke:0.18px #172B4D;">Custom (px):</span>
<div class="b" style="left:626.2px;top:561.2px;width:183.6px;height:38.2px;background:#fff;border:1.200px solid #949dae;border-radius:3.500px;"></div>
<span class="t" style="left:632.90px;top:571.30px;font-size:14px;line-height:18px;color:#172B4D;letter-spacing:0.370px;-webkit-text-stroke:0.18px #172B4D;">250</span>
<svg class="b" style="left:790px;top:572.5px;" width="10" height="15" viewBox="0 0 10 15"><rect x="0.500" y="0.500" width="9" height="14" rx="3" fill="#fafafa" stroke="#d8dade" stroke-width="1"/><path d="M3 6 L5 4 L7 6M3 9 L5 11 L7 9" fill="none" stroke="#2a2f3a" stroke-width="1.100" stroke-linecap="round" stroke-linejoin="round"/></svg>
<span class="t" style="left:355.80px;top:623.00px;font-size:12px;line-height:16px;color:#66728a;letter-spacing:0.113px;font-weight:700;">Preview default visibility</span>
<div class="b" style="left:360px;top:650px;width:14px;height:14px;border-radius:50%;background:#3164d6;"></div>
<div class="b" style="left:364.6px;top:654.6px;width:4.8px;height:4.8px;border-radius:50%;background:#fff;"></div>
<span class="t" style="left:383.00px;top:648.00px;font-size:14px;line-height:18px;color:#172B4D;letter-spacing:0.092px;-webkit-text-stroke:0.18px #172B4D;">Collapsed</span>
<div class="b" style="left:360px;top:673.3px;width:14px;height:14px;border-radius:50%;background:#fff;border:1px solid #979fb0;"></div>
<span class="t" style="left:383.00px;top:671.30px;font-size:14px;line-height:18px;color:#172B4D;letter-spacing:-0.008px;-webkit-text-stroke:0.18px #172B4D;">Expanded</span>
<div class="b" style="left:1380.7px;top:824px;width:52.6px;height:28.8px;background:#3164d6;border-radius:3px;"></div>
<span class="t" style="left:1391.30px;top:829.50px;font-size:14px;line-height:18px;color:#fff;letter-spacing:-0.433px;font-weight:700;">Save</span>
<span class="t" style="left:1444.30px;top:829.50px;font-size:14px;line-height:18px;color:#3164d6;letter-spacing:-0.236px;-webkit-text-stroke:0.18px #3164d6;">Cancel</span>
<div class="b" style="left:936px;top:251.7px;width:572px;height:561.1px;background:#f7f8f9;"></div>
<span class="t" style="left:951.40px;top:273.70px;font-size:14px;line-height:18px;color:#172B4D;letter-spacing:-0.203px;font-weight:700;">Live Preview</span>
<svg class="b" style="left:1467.05px;top:272.95px;" width="19.5" height="19.5" viewBox="0 0 20 20"><circle cx="10" cy="10" r="10" fill="#1c2b4f"/><path d="M6.900 7.900a3.200 3.200 0 1 1 4.700 2.800c-1 .600-1.500 1.100-1.500 2.200" fill="none" stroke="#fff" stroke-width="2.100" stroke-linecap="round"/><circle cx="10.100" cy="15.800" r="1.300" fill="#fff"/></svg>
<div class="b" style="left:951.3px;top:305.8px;width:541px;height:491.5px;background:#fff;border-radius:9px;overflow:hidden;"></div>
<div class="b" style="left:966.6px;top:321.4px;width:510.3px;height:1.6px;background:#eceef1;"></div>
<div class="b" style="left:975.3px;top:336.7px;width:2.0px;height:1.9px;background:#2c3752;border-radius:0.500px;"></div>
<div class="b" style="left:975.3px;top:340.55px;width:2.0px;height:1.9px;background:#2c3752;border-radius:0.500px;"></div>
<div class="b" style="left:975.3px;top:344.40000000000003px;width:2.0px;height:1.9px;background:#2c3752;border-radius:0.500px;"></div>
<div class="b" style="left:979.3px;top:336.7px;width:2.0px;height:1.9px;background:#2c3752;border-radius:0.500px;"></div>
<div class="b" style="left:979.3px;top:340.55px;width:2.0px;height:1.9px;background:#2c3752;border-radius:0.500px;"></div>
<div class="b" style="left:979.3px;top:344.40000000000003px;width:2.0px;height:1.9px;background:#2c3752;border-radius:0.500px;"></div>
<svg class="b" style="left:998px;top:336.9px;" width="14" height="10" viewBox="0 0 14 10"><path d="M2.200 2.400 L7 7.200 L11.800 2.400" fill="none" stroke="#1c2b4f" stroke-width="2" stroke-linecap="round" stroke-linejoin="round"/></svg>
<svg class="b" style="left:1022.7px;top:333.7px;" width="20" height="17" viewBox="0 0 20 17"><path d="M0.200 2.500 Q0.200 0.300 2.400 0.300 H6.800 Q7.900 0.300 8.500 1.200 L9.100 2.200 H17.500 Q19.700 2.200 19.700 4.400 V5.500 H0.200Z" fill="#a3c0fa"/><rect x="0.200" y="3.100" width="19.500" height="13.600" rx="1.800" fill="#86abf7"/></svg>
<span class="t" style="left:1058.70px;top:332.20px;font-size:15px;line-height:20px;color:#1f2d4d;letter-spacing:0.191px;-webkit-text-stroke:0.18px #1f2d4d;">Office Documents</span>
<svg class="b" style="left:1433.8999999999999px;top:330.1px;" width="24" height="24" viewBox="0 0 24 24"><g fill="none" stroke="#1c2b4f" stroke-width="1.600" stroke-linecap="round" stroke-linejoin="round"><path d="M11.500 8.500 C 12.600 7, 14.200 6.200, 15.600 6.600 C 17.600 7.300, 17.800 9.600, 16.600 10.800 L 14.400 12.500"/><path d="M9.300 10.700 L 7.400 12.600 C 6.200 14, 6.600 16, 8.400 16.700 C 9.800 17.100, 11 16.200, 12.300 14.700"/><path d="M5 5.200 L6.800 6.800M9.300 5.200 V6.600M5 9.400 H6.800M16.500 14.400 H18.600M14 17.200 V18.400M16.500 17 L18.600 18.600" stroke-width="1.300"/></g></svg>
<div class="b" style="left:966.6px;top:361px;width:510.3px;height:239.5px;background:#f7f8f9;"></div>
<div class="b" style="left:1022.9000000000001px;top:371.3px;width:19.6px;height:19.5px;background:#3b7a47;border-radius:2.500px;"></div>
<span class="t" style="left:1022.70px;top:372.30px;font-size:14px;line-height:18px;color:#fff;letter-spacing:0.000px;font-weight:700;width:20px;text-align:center;">X</span>
<span class="t" style="left:1058.70px;top:371.00px;font-size:15px;line-height:20px;color:#1f2d4d;letter-spacing:0.146px;-webkit-text-stroke:0.18px #1f2d4d;">34_RACI-in-Scrum.xlsx</span>
<div class="b" style="left:966.6px;top:400.2px;width:510.3px;height:1.3px;background:#dfe2e8;"></div>
<div class="b" style="left:1022.9000000000001px;top:411.2px;width:19.6px;height:19.5px;background:#2d55b8;border-radius:2.500px;"></div>
<span class="t" style="left:1022.70px;top:412.20px;font-size:13.5px;line-height:18px;color:#fff;letter-spacing:0.000px;font-weight:700;width:20px;text-align:center;">W</span>
<span class="t" style="left:1058.70px;top:410.90px;font-size:15px;line-height:20px;color:#1f2d4d;letter-spacing:0.144px;-webkit-text-stroke:0.18px #1f2d4d;">Builder brochure.docx</span>
<div class="b" style="left:966.6px;top:440.15px;width:510.3px;height:1.3px;background:#dfe2e8;"></div>
<div class="b" style="left:1022.9000000000001px;top:451.1px;width:19.6px;height:19.5px;background:#c04a2b;border-radius:2.500px;"></div>
<span class="t" style="left:1022.70px;top:452.10px;font-size:14px;line-height:18px;color:#fff;letter-spacing:0.000px;font-weight:700;width:20px;text-align:center;">P</span>
<span class="t" style="left:1058.70px;top:450.80px;font-size:15px;line-height:20px;color:#1f2d4d;letter-spacing:0.234px;-webkit-text-stroke:0.18px #1f2d4d;">Colorful product roadmap timeline.pptx</span>
<div class="b" style="left:966.6px;top:480.1px;width:510.3px;height:1.3px;background:#dfe2e8;"></div>
<div class="b" style="left:1022.9000000000001px;top:491.0px;width:19.6px;height:19.5px;background:#3b7a47;border-radius:2.500px;"></div>
<span class="t" style="left:1022.70px;top:492.00px;font-size:14px;line-height:18px;color:#fff;letter-spacing:0.000px;font-weight:700;width:20px;text-align:center;">X</span>
<span class="t" style="left:1058.70px;top:490.70px;font-size:15px;line-height:20px;color:#1f2d4d;letter-spacing:0.157px;-webkit-text-stroke:0.18px #1f2d4d;">Date tracking Gantt chart.xlsx</span>
<div class="b" style="left:966.6px;top:520.05px;width:510.3px;height:1.3px;background:#dfe2e8;"></div>
<div class="b" style="left:1022.9000000000001px;top:530.9px;width:19.6px;height:19.5px;background:#2d55b8;border-radius:2.500px;"></div>
<span class="t" style="left:1022.70px;top:531.90px;font-size:13.5px;line-height:18px;color:#fff;letter-spacing:0.000px;font-weight:700;width:20px;text-align:center;">W</span>
<span class="t" style="left:1058.70px;top:530.60px;font-size:15px;line-height:20px;color:#1f2d4d;letter-spacing:0.088px;-webkit-text-stroke:0.18px #1f2d4d;">Expense form.docx</span>
<div class="b" style="left:966.6px;top:560.0px;width:510.3px;height:1.3px;background:#dfe2e8;"></div>
<div class="b" style="left:1022.9000000000001px;top:570.8px;width:19.6px;height:19.5px;background:#c04a2b;border-radius:2.500px;"></div>
<span class="t" style="left:1022.70px;top:571.80px;font-size:14px;line-height:18px;color:#fff;letter-spacing:0.000px;font-weight:700;width:20px;text-align:center;">P</span>
<span class="t" style="left:1058.70px;top:570.50px;font-size:15px;line-height:20px;color:#1f2d4d;letter-spacing:0.166px;-webkit-text-stroke:0.18px #1f2d4d;">Gameboard infographics poster.pptx</span>
<div class="b" style="left:966.6px;top:599.95px;width:510.3px;height:1.3px;background:#e6e8ec;"></div>
<div class="b" style="left:966.6px;top:604.6px;width:510.3px;height:1.8px;background:#e6e8ec;"></div>
<div class="b" style="left:975.3px;top:620.1999999999999px;width:2.0px;height:1.9px;background:#2c3752;border-radius:0.500px;"></div>
<div class="b" style="left:975.3px;top:624.05px;width:2.0px;height:1.9px;background:#2c3752;border-radius:0.500px;"></div>
<div class="b" style="left:975.3px;top:627.9px;width:2.0px;height:1.9px;background:#2c3752;border-radius:0.500px;"></div>
<div class="b" style="left:979.3px;top:620.1999999999999px;width:2.0px;height:1.9px;background:#2c3752;border-radius:0.500px;"></div>
<div class="b" style="left:979.3px;top:624.05px;width:2.0px;height:1.9px;background:#2c3752;border-radius:0.500px;"></div>
<div class="b" style="left:979.3px;top:627.9px;width:2.0px;height:1.9px;background:#2c3752;border-radius:0.500px;"></div>
<svg class="b" style="left:1000.5px;top:618.7px;" width="10" height="14" viewBox="0 0 10 14"><path d="M2.400 2.200 L7.200 7 L2.400 11.800" fill="none" stroke="#1c2b4f" stroke-width="2" stroke-linecap="round" stroke-linejoin="round"/></svg>
<div class="b" style="left:1022.7px;top:616px;width:19.7px;height:19.5px;background:#e8613c;border-radius:2.500px;"></div>
<span class="t" style="left:1022.70px;top:620.90px;font-size:8px;line-height:10px;color:#fff;letter-spacing:0.000px;font-weight:700;width:19.700px;text-align:center;letter-spacing:0.100px;">PDF</span>
<span class="t" style="left:1058.70px;top:615.70px;font-size:15px;line-height:20px;color:#1f2d4d;letter-spacing:0.147px;-webkit-text-stroke:0.18px #1f2d4d;">DataJournalismHandbook.pdf</span>
<svg class="b" style="left:1433.8999999999999px;top:613.8000000000001px;" width="24" height="24" viewBox="0 0 24 24"><g fill="none" stroke="#1c2b4f" stroke-width="1.600" stroke-linecap="round" stroke-linejoin="round"><path d="M11.500 8.500 C 12.600 7, 14.200 6.200, 15.600 6.600 C 17.600 7.300, 17.800 9.600, 16.600 10.800 L 14.400 12.500"/><path d="M9.300 10.700 L 7.400 12.600 C 6.200 14, 6.600 16, 8.400 16.700 C 9.800 17.100, 11 16.200, 12.300 14.700"/><path d="M5 5.200 L6.800 6.800M9.300 5.200 V6.600M5 9.400 H6.800M16.500 14.400 H18.600M14 17.200 V18.400M16.500 17 L18.600 18.600" stroke-width="1.300"/></g></svg>
<div class="b" style="left:966.6px;top:645px;width:510.3px;height:1.3px;background:#e6e8ec;"></div>
<div class="b" style="left:975.3px;top:660.1999999999999px;width:2.0px;height:1.9px;background:#2c3752;border-radius:0.500px;"></div>
<div class="b" style="left:975.3px;top:664.05px;width:2.0px;height:1.9px;background:#2c3752;border-radius:0.500px;"></div>
<div class="b" style="left:975.3px;top:667.9px;width:2.0px;height:1.9px;background:#2c3752;border-radius:0.500px;"></div>
<div class="b" style="left:979.3px;top:660.1999999999999px;width:2.0px;height:1.9px;background:#2c3752;border-radius:0.500px;"></div>
<div class="b" style="left:979.3px;top:664.05px;width:2.0px;height:1.9px;background:#2c3752;border-radius:0.500px;"></div>
<div class="b" style="left:979.3px;top:667.9px;width:2.0px;height:1.9px;background:#2c3752;border-radius:0.500px;"></div>
<svg class="b" style="left:998px;top:660.4px;" width="14" height="10" viewBox="0 0 14 10"><path d="M2.200 2.400 L7 7.200 L11.800 2.400" fill="none" stroke="#1c2b4f" stroke-width="2" stroke-linecap="round" stroke-linejoin="round"/></svg>
<div class="b" style="left:1022.9000000000001px;top:656.0px;width:19.6px;height:19.5px;background:#3b7a47;border-radius:2.500px;"></div>
<span class="t" style="left:1022.70px;top:657.00px;font-size:14px;line-height:18px;color:#fff;letter-spacing:0.000px;font-weight:700;width:20px;text-align:center;">X</span>
<span class="t" style="left:1058.70px;top:655.70px;font-size:15px;line-height:20px;color:#1f2d4d;letter-spacing:0.032px;-webkit-text-stroke:0.18px #1f2d4d;">Blue balance sheet.xlsx</span>
<svg class="b" style="left:1433.8999999999999px;top:653.8000000000001px;" width="24" height="24" viewBox="0 0 24 24"><g fill="none" stroke="#1c2b4f" stroke-width="1.600" stroke-linecap="round" stroke-linejoin="round"><path d="M11.500 8.500 C 12.600 7, 14.200 6.200, 15.600 6.600 C 17.600 7.300, 17.800 9.600, 16.600 10.800 L 14.400 12.500"/><path d="M9.300 10.700 L 7.400 12.600 C 6.200 14, 6.600 16, 8.400 16.700 C 9.800 17.100, 11 16.200, 12.300 14.700"/><path d="M5 5.200 L6.800 6.800M9.300 5.200 V6.600M5 9.400 H6.800M16.500 14.400 H18.600M14 17.200 V18.400M16.500 17 L18.600 18.600" stroke-width="1.300"/></g></svg>
<svg class="b" style="left:966.6px;top:685px" width="510.300" height="112.300" viewBox="0 0 510.300 112.300"><rect x="0" y="0" width="510.300" height="28.300" fill="#f3f3f3"/><rect x="0" y="28.300" width="41.700" height="90" fill="#f3f3f3"/><path d="M0 27.800 H41.700" stroke="#c9c9c9" stroke-width="1.200"/><path d="M41.200 0 V28.300" stroke="#c9c9c9" stroke-width="1.200"/><path d="M41.700 28.300 H510.300" stroke="#e2e2e2" stroke-width="1"/><path d="M41.700 28.300 V120" stroke="#e2e2e2" stroke-width="1"/><path d="M386 10 V28" stroke="#e6e6e6" stroke-width="1"/><path d="M37 13 V24 H26Z" fill="#c6c6c6"/><path d="M0 63.500 H41.700M0 90.500 H41.700" stroke="#ececec" stroke-width="1"/><text x="135" y="24" font-size="12" fill="#5a5a5a" text-anchor="middle" font-family="DejaVu Sans, Liberation Sans, sans-serif">B</text><text x="468.400" y="24" font-size="12" fill="#5a5a5a" text-anchor="middle" font-family="DejaVu Sans, Liberation Sans, sans-serif">C</text><text x="29.500" y="55" font-size="12.500" fill="#4a4a4a" text-anchor="middle" font-family="DejaVu Sans, Liberation Sans, sans-serif">10</text><text x="29.500" y="82" font-size="12.500" fill="#4a4a4a" text-anchor="middle" font-family="DejaVu Sans, Liberation Sans, sans-serif">11</text><text x="29.500" y="109" font-size="12.500" fill="#4a4a4a" text-anchor="middle" font-family="DejaVu Sans, Liberation Sans, sans-serif">12</text><text x="123.7" y="48.500" font-size="9.800" fill="#555" text-anchor="middle" font-family="DejaVu Sans, Liberation Sans, sans-serif">$0.00</text><path d="M123.7 59 V120" stroke="#dcdcdc" stroke-width="1"/><text x="226.1" y="48.500" font-size="9.800" fill="#555" text-anchor="middle" font-family="DejaVu Sans, Liberation Sans, sans-serif">$500.00</text><path d="M226.1 59 V120" stroke="#dcdcdc" stroke-width="1"/><text x="328.1" y="48.500" font-size="9.800" fill="#555" text-anchor="middle" font-family="DejaVu Sans, Liberation Sans, sans-serif">$1,000.00</text><path d="M328.1 59 V120" stroke="#dcdcdc" stroke-width="1"/><text x="430.1" y="48.500" font-size="9.800" fill="#555" text-anchor="middle" font-family="DejaVu Sans, Liberation Sans, sans-serif">$1,500.00</text><path d="M430.1 59 V120" stroke="#dcdcdc" stroke-width="1"/><text x="506" y="48.500" font-size="10.300" fill="#555" font-family="DejaVu Sans, Liberation Sans, sans-serif">$2</text><rect x="123.700" y="60.8" width="203.6" height="8.000" fill="#93afe0"/><rect x="123.700" y="68.7" width="347" height="8.000" fill="#2b487d"/><rect x="123.700" y="82.6" width="305.6" height="8.000" fill="#93afe0"/><rect x="123.700" y="90.5" width="420" height="8.000" fill="#2b487d"/><rect x="123.700" y="103.3" width="132.6" height="8.000" fill="#93afe0"/><rect x="123.700" y="111.2" width="255.7" height="8.000" fill="#2b487d"/><text x="115.200" y="72" font-size="10.300" fill="#444" text-anchor="end" font-family="Liberation Sans, sans-serif">Cash</text><text x="115.200" y="93.3" font-size="10.300" fill="#444" text-anchor="end" font-family="Liberation Sans, sans-serif">Investments</text><text x="115.200" y="114.6" font-size="10.300" fill="#444" text-anchor="end" font-family="Liberation Sans, sans-serif">Inventories</text></svg>
</div>
</body></html>
